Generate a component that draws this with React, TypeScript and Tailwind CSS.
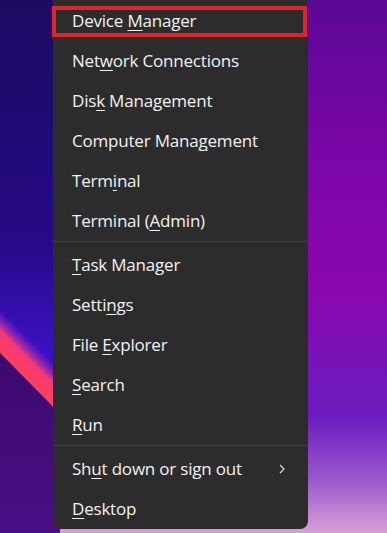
import React from 'react'

type Item = { pre: string; key: string; post: string; sub?: boolean; highlight?: boolean }

const GROUPS: Item[][] = [
  [
    { pre: 'Device ', key: 'M', post: 'anager', highlight: true },
    { pre: 'Net', key: 'w', post: 'ork Connections' },
    { pre: 'Dis', key: 'k', post: ' Management' },
    { pre: 'Computer Mana', key: 'g', post: 'ement' },
    { pre: 'Term', key: 'i', post: 'nal' },
    { pre: 'Terminal (', key: 'A', post: 'dmin)' },
  ],
  [
    { pre: '', key: 'T', post: 'ask Manager' },
    { pre: 'Setti', key: 'n', post: 'gs' },
    { pre: 'File ', key: 'E', post: 'xplorer' },
    { pre: '', key: 'S', post: 'earch' },
    { pre: '', key: 'R', post: 'un' },
  ],
  [
    { pre: 'Sh', key: 'u', post: 't down or sign out', sub: true },
    { pre: '', key: 'D', post: 'esktop' },
  ],
]

function Row({ item }: { item: Item }) {
  return (
    <div className="relative flex items-center h-10 pl-[19px] pr-6">
      {item.highlight && (
        <div className="absolute left-[-1px] right-[1px] top-[5px] bottom-[4px] border-4 border-[#e0242c]" />
      )}
      <span className="flex-1 text-[17px] text-[#f2f2f2] tracking-[-0.2px]">
        {item.pre}
        <span className="underline underline-offset-[3px] decoration-1">{item.key}</span>
        {item.post}
      </span>
      {item.sub && (
        <svg width="8" height="12" viewBox="0 0 8 12" className="mr-[-2px]">
          <path d="M2 2l4 4-4 4" fill="none" stroke="#d8d8d8" strokeWidth="1.2" />
        </svg>
      )}
    </div>
  )
}

export default function App() {
  return (
    <div
      className="relative w-[387px] h-[533px] overflow-hidden"
      style={{ fontFamily: '"Open Sans", "Noto Sans", sans-serif' }}
    >
      {/* wallpaper */}
      <div className="absolute inset-0 bg-[linear-gradient(180deg,#5a0896_0%,#7c06a8_30%,#8a08b0_55%,#6a1cbe_78%,#9a58cc_90%,#d8a0d8_100%)]" />
      <svg className="absolute left-0 top-0" width="60" height="533" viewBox="0 0 60 533">
        <defs>
          <linearGradient id="lb" x1="0" y1="0" x2="0" y2="1">
            <stop offset="0" stopColor="#1c0a62" />
            <stop offset="0.45" stopColor="#260a86" />
            <stop offset="0.65" stopColor="#3a10c0" />
            <stop offset="1" stopColor="#3a10c0" />
          </linearGradient>
          <linearGradient id="streak" gradientUnits="userSpaceOnUse" x1="26" y1="380" x2="50" y2="356">
            <stop offset="0" stopColor="#ff4058" />
            <stop offset="0.5" stopColor="#f03a78" />
            <stop offset="0.8" stopColor="#8020c0" stopOpacity="0.6" />
            <stop offset="1" stopColor="#3a10c0" stopOpacity="0" />
          </linearGradient>
          <linearGradient id="lower" x1="0" y1="0" x2="0" y2="1">
            <stop offset="0" stopColor="#3c0a70" />
            <stop offset="1" stopColor="#4a0e84" />
          </linearGradient>
        </defs>
        <rect width="60" height="533" fill="url(#lb)" />
        <path d="M0 280 L60 340 L60 414 L0 353 Z" fill="url(#streak)" />
        <path d="M0 353 L60 414 L60 533 L0 533 Z" fill="url(#lower)" />
      </svg>

      {/* menu */}
      <div className="absolute left-[53px] top-[-20px] w-[255px] h-[549px] bg-[#2c2c2c] rounded-b-[8px] pt-[21px]">
        {GROUPS.map((g, gi) => (
          <div key={gi} className={gi > 0 ? 'border-t border-[#404040] pt-[3px]' : ''}>
            {g.map((it, i) => (
              <Row key={i} item={it} />
            ))}
          </div>
        ))}
      </div>
    </div>
  )
}
